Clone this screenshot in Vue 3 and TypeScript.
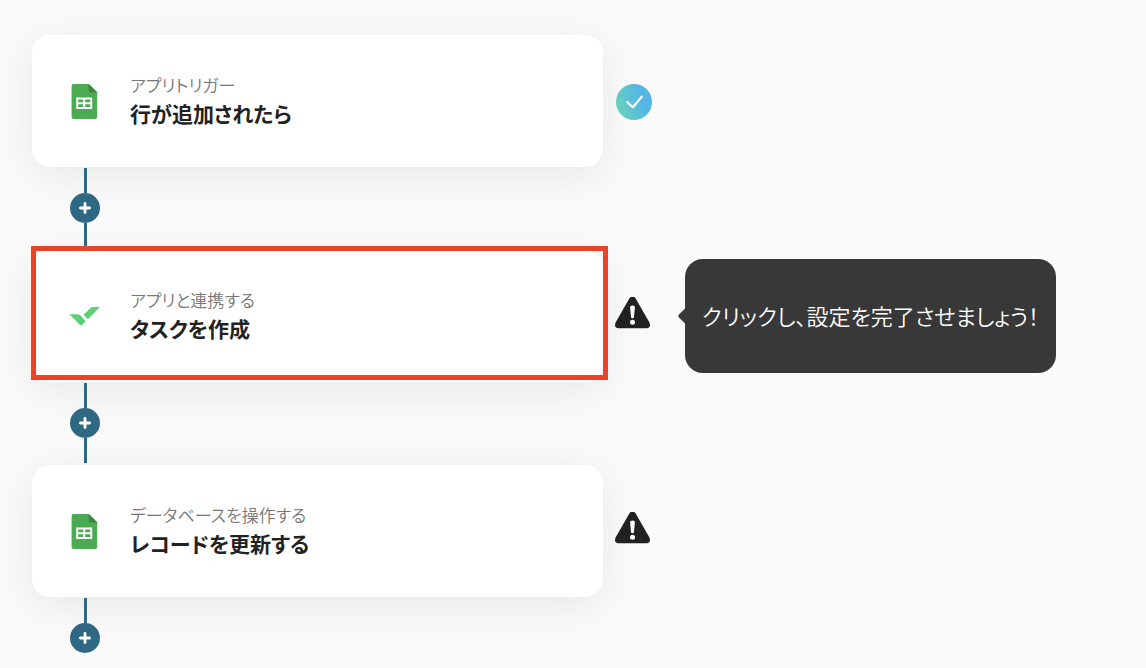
<script setup lang="ts">
interface Step {
  id: number
  app: 'sheets' | 'wrike'
  label: string
  title: string
  status: 'done' | 'warning'
  highlighted?: boolean
  hint?: string
}

const steps: Step[] = [
  { id: 1, app: 'sheets', label: 'アプリトリガー', title: '行が追加されたら', status: 'done' },
  {
    id: 2,
    app: 'wrike',
    label: 'アプリと連携する',
    title: 'タスクを作成',
    status: 'warning',
    highlighted: true,
    hint: 'クリックし、設定を完了させましょう！',
  },
  { id: 3, app: 'sheets', label: 'データベースを操作する', title: 'レコードを更新する', status: 'warning' },
]
</script>

<template>
  <main class="flow">
    <template v-for="(step, index) in steps" :key="step.id">
      <section class="row">
        <button type="button" class="card" :class="{ highlighted: step.highlighted }">
          <svg v-if="step.app === 'sheets'" class="app-icon" viewBox="0 0 30 36" aria-hidden="true">
            <path d="M3.6 1H19L27.2 9.2V33.9Q27.2 35.9 25.2 35.9H3.6Q1.6 35.9 1.6 33.9V3Q1.6 1 3.6 1Z" fill="#4caa52" />
            <path d="M18.6 1L27.2 9.6H20.1Q18.6 9.6 18.6 8.1Z" fill="#3c8440" />
            <path
              fill-rule="evenodd"
              d="M6.2 14.4H22.2V26H6.2ZM8.2 16.4V19.2H13.3V16.4ZM15.2 16.4V19.2H20.3V16.4ZM8.2 21.2V24H13.3V21.2ZM15.2 21.2V24H20.3V21.2Z"
              fill="#fff"
            />
          </svg>
          <svg v-else class="app-icon" viewBox="0 0 30 36" aria-hidden="true">
            <path d="M-0.6 16.2H7.6Q9.2 16.2 10.3 17.3L15.6 23.2L12.4 26.8Q11.2 28.2 10 27Z" fill="#5dd076" />
            <path d="M13.5 16.8L20 10.4Q21.4 9 23.2 9H30L17.9 21.2Z" fill="#5dd076" />
          </svg>
          <span class="text">
            <span class="label">{{ step.label }}</span>
            <span class="title">{{ step.title }}</span>
          </span>
        </button>

        <svg v-if="step.status === 'done'" class="status" viewBox="0 0 38 38" role="img" aria-label="設定済み">
          <defs>
            <linearGradient id="done-fill" x1="0" y1="0.65" x2="1" y2="0.35">
              <stop offset="0.05" stop-color="#69d3c1" />
              <stop offset="0.75" stop-color="#55b5e6" />
            </linearGradient>
          </defs>
          <circle cx="19" cy="20" r="18" fill="url(#done-fill)" />
          <path d="M12.3 20.2L17.9 25.2L26.8 14.6" fill="none" stroke="#fff" stroke-width="2.2" stroke-linecap="round" stroke-linejoin="round" />
        </svg>
        <svg v-else class="status" viewBox="0 0 38 38" role="img" aria-label="未設定">
          <path
            d="M14.6 1.1Q17.5 -2.5 20.4 1.1L34.4 25.6Q36.4 30.9 31.6 31.2H3.4Q-1.4 30.9 0.6 25.6Z"
            fill="#222"
          />
          <path d="M15.1 10Q15.1 8.4 17.5 8.4Q19.9 8.4 19.9 10L19 20.2Q18.8 21.2 17.5 21.2Q16.2 21.2 16 20.2Z" fill="#fff" />
          <circle cx="17.5" cy="25.2" r="2.5" fill="#fff" />
        </svg>

        <p v-if="step.hint" class="hint">{{ step.hint }}</p>
      </section>

      <div class="connector">
        <span class="line"></span>
        <button type="button" class="add" aria-label="ステップを追加">
          <svg viewBox="0 0 12 12" aria-hidden="true">
            <path d="M6 1.4V10.6M1.4 6H10.6" stroke="#fff" stroke-width="2.8" stroke-linecap="round" />
          </svg>
        </button>
        <span v-if="index < steps.length - 1" class="line"></span>
      </div>
    </template>
  </main>
</template>

<style>
body {
  margin: 0;
  background: #fafafa;
}
</style>

<style scoped>
.flow {
  box-sizing: border-box;
  padding: 35px 32px 14px;
  font-family: 'Noto Sans CJK JP', 'Noto Sans', sans-serif;
  font-feature-settings: 'palt';
  color: #222;
}

.row {
  display: flex;
  align-items: center;
}

.card {
  position: relative;
  display: flex;
  align-items: center;
  gap: 30px;
  flex: 0 1 571px;
  min-width: 0;
  padding: 38px;
  border: 0;
  border-radius: 18px;
  background: #fff;
  box-shadow: 0 8px 40px rgba(0, 0, 0, 0.08);
  color: inherit;
  font: inherit;
  font-feature-settings: inherit;
  text-align: left;
  cursor: pointer;
}

.card.highlighted::after {
  content: '';
  position: absolute;
  inset: -4px -5px 2px -1px;
  border: 5px solid #eb4228;
}

.app-icon {
  flex: none;
  width: 30px;
  height: 36px;
  overflow: visible;
}

.text {
  display: flex;
  flex-direction: column;
}

.label {
  font-size: 17px;
  font-weight: 350;
  line-height: 24px;
  color: #777;
}

.title {
  font-size: 21px;
  font-weight: 700;
  line-height: 32px;
}

.status {
  flex: none;
  width: 38px;
  height: 38px;
  margin-left: 12px;
}

.hint {
  position: relative;
  margin: 0 0 0 32px;
  padding: 40px 17px 42px;
  border-radius: 18px;
  background: #383838;
  color: #fff;
  font-size: 22px;
  font-weight: 350;
  line-height: 32px;
  white-space: nowrap;
}

.hint::before {
  content: '';
  position: absolute;
  top: 50%;
  left: -5px;
  width: 12px;
  height: 12px;
  margin-top: -6px;
  border-radius: 2px;
  background: #383838;
  transform: rotate(45deg);
}

.connector {
  display: flex;
  flex-direction: column;
  align-items: center;
  width: 30px;
  margin-left: 38px;
  padding: 1px 0 2px;
}

.line {
  position: relative;
  width: 3px;
  height: 25px;
  margin-left: 1px;
  background: #2f6883;
}

.add {
  position: relative;
  display: flex;
  align-items: center;
  justify-content: center;
  width: 30px;
  height: 30px;
  padding: 0;
  border: 0;
  border-radius: 50%;
  background: #2f6883;
  cursor: pointer;
}

.add svg {
  width: 12px;
  height: 12px;
}
</style>
